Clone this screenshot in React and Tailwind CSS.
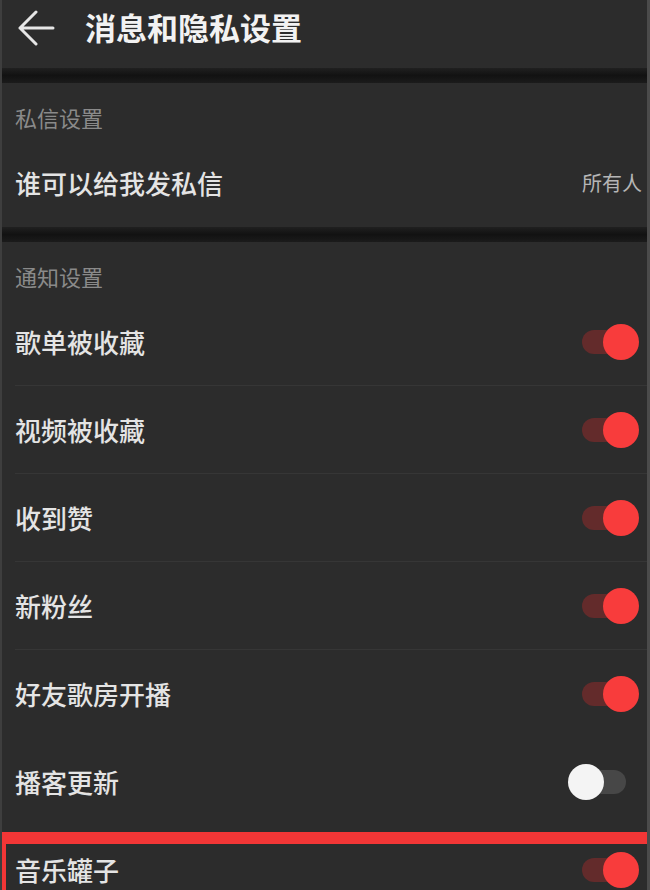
import React from "react";

const font = { fontFamily: '"Noto Sans CJK SC", "Noto Sans", sans-serif' };

function Toggle({ on }) {
  return (
    <div className="relative w-[71px] h-[36px] shrink-0">
      <div
        className={
          "absolute left-[14px] right-[13px] top-[6px] h-[24px] rounded-full " +
          (on ? "bg-[#632b2b]" : "bg-[#474747]")
        }
      />
      <div
        className={
          "absolute top-0 w-[36px] h-[36px] rounded-full " +
          (on ? "right-0 bg-[#f83c3c]" : "left-0 bg-[#f4f4f4]")
        }
      />
    </div>
  );
}

function Bar() {
  return <div className="h-[15px] bg-gradient-to-b from-[#202020] via-[#121212] to-[#1b1b1b]" />;
}

function Label({ children }) {
  return (
    <div className="h-[56px] pt-[22px] pl-[13px] text-[22px] leading-[24px] text-[#8a8a8a]">
      {children}
    </div>
  );
}

function Row({ text, on, border = true }) {
  return (
    <div
      className={
        "h-[88px] ml-[13px] pr-[8px] flex items-center justify-between " +
        (border ? "border-b border-[#363636]" : "")
      }
    >
      <span className="text-[26px] leading-none text-[#e4e4e4] font-medium">{text}</span>
      <Toggle on={on} />
    </div>
  );
}

export default function App() {
  const rows = [
    ["歌单被收藏", true],
    ["视频被收藏", true],
    ["收到赞", true],
    ["新粉丝", true],
    ["好友歌房开播", true],
    ["播客更新", false],
    ["音乐罐子", true],
  ];
  return (
    <div
      style={font}
      className="relative w-[650px] h-[890px] overflow-hidden bg-[#2c2c2c] border-l-2 border-r-[3px] border-l-[#3e3e3e] border-r-[#4b4b4b]"
    >
      <div className="h-[68px] flex items-center">
        <svg width="40" height="40" viewBox="0 0 40 40" className="ml-[14px] mt-[-16px] shrink-0">
          <path d="M4 22 H37 M20 6 L4 22 L20 38" fill="none" stroke="#e6e6e6" strokeWidth="3" strokeLinecap="round" strokeLinejoin="round" />
        </svg>
        <span className="ml-[29px] mt-[-16px] text-[31px] leading-none font-bold text-[#f2f2f2]">
          消息和隐私设置
        </span>
      </div>
      <Bar />
      <Label>私信设置</Label>
      <div className="h-[88px] ml-[13px] pr-[5px] flex items-center justify-between">
        <span className="text-[26px] leading-none text-[#e4e4e4] font-medium">谁可以给我发私信</span>
        <span className="text-[20px] leading-none text-[#b5b5b5]">所有人</span>
      </div>
      <Bar />
      <Label>通知设置</Label>
      {rows.map(([t, on], i) => (
        <Row key={t} text={t} on={on} border={i < 4} />
      ))}
      <div className="absolute left-0 right-0 top-[832px] h-[80px] border-t-[12px] border-l-4 border-[#f23636]" />
    </div>
  );
}
